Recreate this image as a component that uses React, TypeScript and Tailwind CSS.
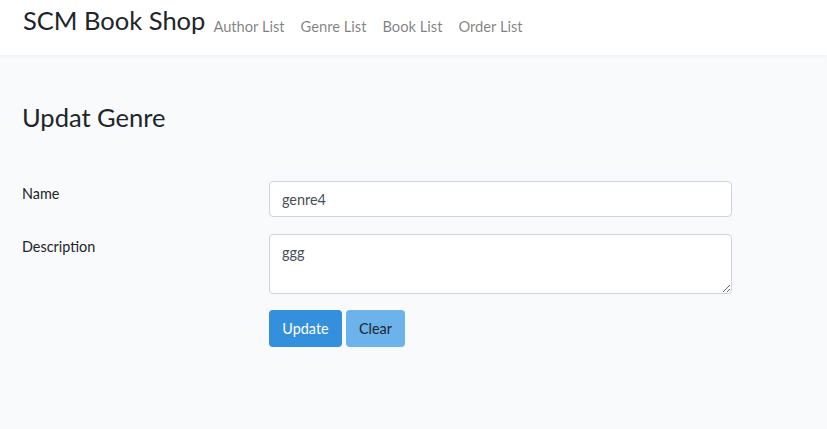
import React from "react";

export default function App() {
  const font = { fontFamily: "Lato, 'Noto Sans', sans-serif" };
  return (
    <div className="min-h-[429px] bg-[#f8fafc] text-[#212529]" style={font}>
      <nav className="h-[55px] bg-white shadow-[0_2px_4px_rgba(0,0,0,0.04)] flex items-start pl-[23px]">
        <span className="text-[25.5px] leading-none mt-[8px] text-[#212529]">SCM Book Shop</span>
        <div className="flex items-center text-[14.7px] leading-[20px] text-[rgba(0,0,0,0.5)] mt-[16px]">
          <span className="px-[8px]">Author List</span>
          <span className="px-[8px]">Genre List</span>
          <span className="px-[8px]">Book List</span>
          <span className="px-[8px]">Order List</span>
        </div>
      </nav>
      <div className="pl-[22px] pt-[47px]">
        <h3 className="text-[25.5px] leading-[30px] font-normal">Updat Genre</h3>
        <div className="mt-[49px] flex flex-col text-[14.4px]">
          <div className="flex">
            <label className="w-[247px] pt-[1px] leading-[23px]">Name</label>
            <input
              readOnly
              defaultValue="genre4"
              className="w-[463px] h-[36px] bg-white border border-[#ced4da] rounded-[4px] px-[12px] text-[14.4px] text-[#495057] outline-none"
              style={font}
            />
          </div>
          <div className="flex mt-[17px]">
            <label className="w-[247px] pt-[1px] leading-[23px]">Description</label>
            <textarea
              readOnly
              defaultValue="ggg"
              className="w-[463px] h-[60px] bg-white border border-[#ced4da] rounded-[4px] px-[12px] py-[6px] text-[14.4px] leading-[23px] text-[#495057] outline-none"
              style={font}
            />
          </div>
          <div className="flex mt-[16px] pl-[247px] gap-[4px]">
            <button className="h-[37px] w-[73px] bg-[#3490dc] text-white rounded-[4px] text-[14.4px]" style={font}>Update</button>
            <button className="h-[37px] w-[59px] bg-[#6cb2eb] text-[#212529] rounded-[4px] text-[14.4px]" style={font}>Clear</button>
          </div>
        </div>
      </div>
    </div>
  );
}
